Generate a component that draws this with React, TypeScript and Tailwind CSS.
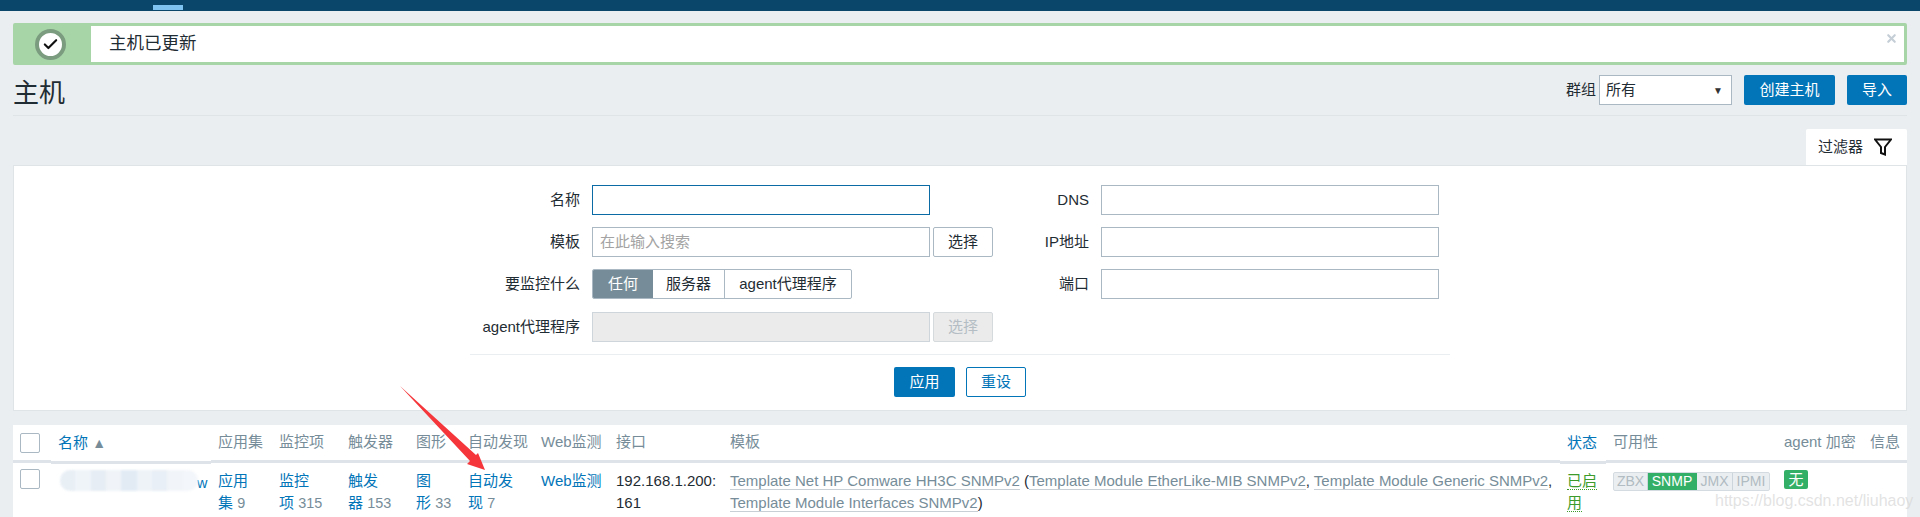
import React from 'react'
import { Check, X } from 'lucide-react'

const FONT = 'font-["Liberation_Sans","Noto_Sans_CJK_SC",sans-serif]'

const Input = ({ focused, placeholder, disabled }: { focused?: boolean; placeholder?: string; disabled?: boolean }) => (
  <div
    className={`h-[30px] w-[338px] border px-[7px] leading-[28px] ${
      focused ? 'border-[#0a6ba5] bg-white' : disabled ? 'border-[#cfd6db] bg-[#ebebeb]' : 'border-[#a9b8c2] bg-white'
    } text-[#a3a3a3]`}
  >
    {placeholder}
  </div>
)

const SelectBtn = ({ disabled }: { disabled?: boolean }) => (
  <button
    className={`ml-[3px] h-[30px] w-[60px] rounded-[2px] border ${
      disabled ? 'border-[#d5dadd] bg-[#ebebeb] text-[#b4bdc4]' : 'border-[#a9b8c2] bg-white text-[#1f2c33]'
    }`}
  >
    选择
  </button>
)

const FormRow = ({ label, labelWidth, className, children }: { label: string; labelWidth: string; className?: string; children: React.ReactNode }) => (
  <div className={`flex h-[30px] items-center ${className ?? ''}`}>
    <label className={`${labelWidth} shrink-0 pr-[12px] text-right text-[#1f2c33]`}>{label}</label>
    {children}
  </div>
)

const Avail = ({ label, width, on }: { label: string; width: string; on?: boolean }) => (
  <span
    className={`${width} border-r text-center leading-[17px] last:border-r-0 ${
      on ? 'border-[#34af67] bg-[#34af67] text-white' : 'border-[#ccd5db] text-[#b0bbc2]'
    }`}
  >
    {label}
  </span>
)

const HEADS = ['应用集', '监控项', '触发器', '图形', '自动发现', 'Web监测', '接口', '模板']

const BLUR_BLOCKS = ['bg-[#e8eff5]', 'bg-[#eff4f9]', 'bg-[#e6edf4]', 'bg-[#f0f4f8]', 'bg-[#e2ebf4]', 'bg-[#eef3f8]', 'bg-[#e8eff6]', 'bg-[#f1f5f9]', 'bg-[#f3f6fa]']

const LinkCell = ({ lines, count }: { lines: string[]; count: string }) => (
  <td className="px-[7px] pt-[7px] align-top leading-[22px]">
    <a className="text-[#0275b8]">{lines[0]}</a>
    <br />
    <a className="text-[#0275b8]">{lines[1]}</a> <span className="text-[14.4px] text-[#768d99]">{count}</span>
  </td>
)

const Tpl = ({ children }: { children: React.ReactNode }) => (
  <a className="border-b border-[#c8d0d6] text-[#768d99]">{children}</a>
)

export default function App() {
  return (
    <div className={`relative h-[517px] overflow-hidden bg-[#ebeef0] text-[15px] text-[#1f2c33] ${FONT}`}>
      <div className="flex h-[11px] items-end bg-[#0a466a] pl-[153px]">
        <div className="mb-px h-[5px] w-[30px] bg-[#7fc4f0]" />
      </div>

      <div className="px-[13px] pt-[12px]">
        <div className="flex h-[42px] rounded-[2px] border-[3px] border-[#a8d5a8] bg-white">
          <div className="flex w-[75px] items-center justify-center bg-[#a8d5a8] pr-[6px]">
            <div className="flex h-[31px] w-[31px] items-center justify-center rounded-full border-[4px] border-[#7b9c7f] bg-white">
              <Check size={17} strokeWidth={3} className="text-[#111]" />
            </div>
          </div>
          <div className="flex-1 pl-[18px] text-[17.5px] leading-[34px]">主机已更新</div>
          <X size={13} strokeWidth={4} className="mr-[6px] mt-[6px] text-[#c5ced6]" />
        </div>

        <div className="flex h-[51px] items-center justify-between border-b border-[#dfe4e7]">
          <h1 className="pt-[5px] text-[26px] leading-none text-[#1f2c33]">主机</h1>
          <div className="flex items-center">
            <span className="mr-[3px]">群组</span>
            <div className="flex h-[30px] w-[133px] items-center justify-between border border-[#a9b8c2] bg-white pl-[6px] pr-[8px]">
              <span>所有</span>
              <span className="text-[10px] text-[#333]">▼</span>
            </div>
            <button className="ml-[12px] h-[30px] w-[91px] rounded-[2px] bg-[#0275b8] text-white">创建主机</button>
            <button className="ml-[12px] h-[30px] w-[60px] rounded-[2px] bg-[#0275b8] text-white">导入</button>
          </div>
        </div>

        <div className="mt-[13px] flex justify-end">
          <div className="flex h-[36px] w-[101px] items-center rounded-t-[2px] bg-white pl-[12px]">
            <span>过滤器</span>
            <svg viewBox="0 0 18 18" className="ml-[11px] h-[18px] w-[18px]" fill="none" stroke="#111" strokeWidth="2">
              <path d="M1 1.5h16l-6 7.5v7.5l-4-1.5v-6z" />
            </svg>
          </div>
        </div>

        <div className="border border-[#dfe4e7] bg-white">
          <div className="flex pl-[456px] pt-[19px]">
            <div className="flex w-[529px] flex-col gap-[12px]">
              <FormRow label="名称" labelWidth="w-[122px]"><Input focused /></FormRow>
              <FormRow label="模板" labelWidth="w-[122px]"><Input placeholder="在此输入搜索" /><SelectBtn /></FormRow>
              <FormRow label="要监控什么" labelWidth="w-[122px]">
                <div className="flex h-[30px] overflow-hidden rounded-[2px] border border-[#a9b8c2] bg-white leading-[28px]">
                  <span className="w-[60px] bg-[#768d99] text-center text-white">任何</span>
                  <span className="w-[72px] border-r border-[#a9b8c2] text-center">服务器</span>
                  <span className="w-[126px] text-center">agent代理程序</span>
                </div>
              </FormRow>
              <FormRow className="mt-px" label="agent代理程序" labelWidth="w-[122px]"><Input disabled /><SelectBtn disabled /></FormRow>
            </div>
            <div className="flex flex-col gap-[12px]">
              <FormRow label="DNS" labelWidth="w-[102px]"><Input /></FormRow>
              <FormRow label="IP地址" labelWidth="w-[102px]"><Input /></FormRow>
              <FormRow label="端口" labelWidth="w-[102px]"><Input /></FormRow>
            </div>
          </div>
          <div className="mx-[456px] mt-[12px] flex justify-center gap-[11px] border-t border-[#ebeef0] pb-[13px] pt-[12px]">
            <button className="h-[30px] w-[61px] rounded-[2px] bg-[#0275b8] text-white">应用</button>
            <button className="h-[30px] w-[60px] rounded-[2px] border border-[#0275b8] bg-white text-[#0275b8]">重设</button>
          </div>
        </div>

        <table className="mt-[14px] w-full table-fixed border-separate border-spacing-0 bg-white">
          <colgroup>
            <col className="w-[38px]" />
            <col className="w-[160px]" />
            <col className="w-[61px]" />
            <col className="w-[69px]" />
            <col className="w-[68px]" />
            <col className="w-[52px]" />
            <col className="w-[73px]" />
            <col className="w-[75px]" />
            <col className="w-[114px]" />
            <col className="w-[837px]" />
            <col className="w-[46px]" />
            <col className="w-[171px]" />
            <col className="w-[86px]" />
            <col className="w-[44px]" />
          </colgroup>
          <thead>
            <tr className="h-[38px] text-left text-[#768d99]">
              <th className="border-b-[3px] border-[#dde3e8] pl-[7px] font-normal">
                <div className="h-[20px] w-[20px] rounded-[2px] border border-[#a9b8c2] bg-white" />
              </th>
              <th className="relative top-px border-b-[3px] border-[#dde3e8] bg-white px-[7px] font-normal text-[#0275b8]">
                名称 <span className="text-[14px] leading-none text-[#768d99]">▲</span>
              </th>
              {HEADS.map(h => (
                <th key={h} className="whitespace-nowrap border-b-[3px] border-[#dde3e8] px-[7px] font-normal">{h}</th>
              ))}
              <th className="relative top-px border-b-[3px] border-[#dde3e8] bg-white px-[7px] font-normal text-[#0275b8]">状态</th>
              <th className="border-b-[3px] border-[#dde3e8] px-[7px] font-normal">可用性</th>
              <th className="whitespace-nowrap border-b-[3px] border-[#dde3e8] px-[7px] font-normal">agent 加密</th>
              <th className="whitespace-nowrap border-b-[3px] border-[#dde3e8] px-[7px] font-normal">信息</th>
            </tr>
          </thead>
          <tbody>
            <tr className="h-[54px]">
              <td className="pl-[7px] pt-[6px] align-top">
                <div className="h-[20px] w-[20px] rounded-[2px] border border-[#a9b8c2] bg-white" />
              </td>
              <td className="px-[7px] pt-[4px] align-top">
                <div className="flex items-center">
                  <div className="ml-[2px] flex h-[21px] w-[138px] shrink-0 overflow-hidden rounded-[10px] blur-[1px]">
                    {BLUR_BLOCKS.map(c => (
                      <div key={c} className={`h-full flex-1 ${c}`} />
                    ))}
                  </div>
                  <span className="-ml-px mt-[6px] text-[14.4px] text-[#0275b8]">w</span>
                </div>
              </td>
              <LinkCell lines={['应用', '集']} count="9" />
              <LinkCell lines={['监控', '项']} count="315" />
              <LinkCell lines={['触发', '器']} count="153" />
              <LinkCell lines={['图', '形']} count="33" />
              <LinkCell lines={['自动发', '现']} count="7" />
              <td className="px-[7px] pt-[7px] align-top leading-[22px] text-[#0275b8]">Web监测</td>
              <td className="px-[7px] pt-[7px] align-top leading-[22px]">192.168.1.200:<br />161</td>
              <td className="px-[7px] pt-[7px] align-top leading-[22px] text-[#1f2c33]">
                <Tpl>Template Net HP Comware HH3C SNMPv2</Tpl> (<Tpl>Template Module EtherLike-MIB SNMPv2</Tpl>, <Tpl>Template Module Generic SNMPv2</Tpl>,{' '}
                <Tpl>Template Module Interfaces SNMPv2</Tpl>)
              </td>
              <td className="px-[7px] pt-[7px] align-top leading-[22px] text-[#3d9b2c]">
                <span className="border-b border-dotted border-[#3d9b2c]">已启</span>
                <br />
                <span className="border-b border-dotted border-[#3d9b2c]">用</span>
              </td>
              <td className="px-[7px] pt-[7px] align-top">
                <div className="inline-flex h-[19px] overflow-hidden rounded-[2px] border border-[#d5dce1] bg-[#ebeef0] text-[14px]">
                  <Avail label="ZBX" width="w-[34px]" />
                  <Avail label="SNMP" width="w-[49px]" on />
                  <Avail label="JMX" width="w-[36px]" />
                  <Avail label="IPMI" width="w-[36px]" />
                </div>
              </td>
              <td className="px-[7px] pt-[7px] align-top">
                <span className="block h-[19px] w-[24px] rounded-[2px] bg-[#34af67] text-center leading-[19px] text-white">无</span>
              </td>
              <td />
            </tr>
          </tbody>
        </table>
      </div>

      {/* red annotation arrow */}
      <svg className="absolute left-[395px] top-[380px] h-[100px] w-[100px]" viewBox="0 0 100 100">
        <path d="M5 6 L81 75 L83 73 L90 90 L72 84 L75 81 Z" fill="#f5363a" />
      </svg>
      <span className="absolute left-[1715px] top-[489px] text-[16px] text-[#d6d6d6]/70">https://blog.csdn.net/liuhaoy</span>
    </div>
  )
}
